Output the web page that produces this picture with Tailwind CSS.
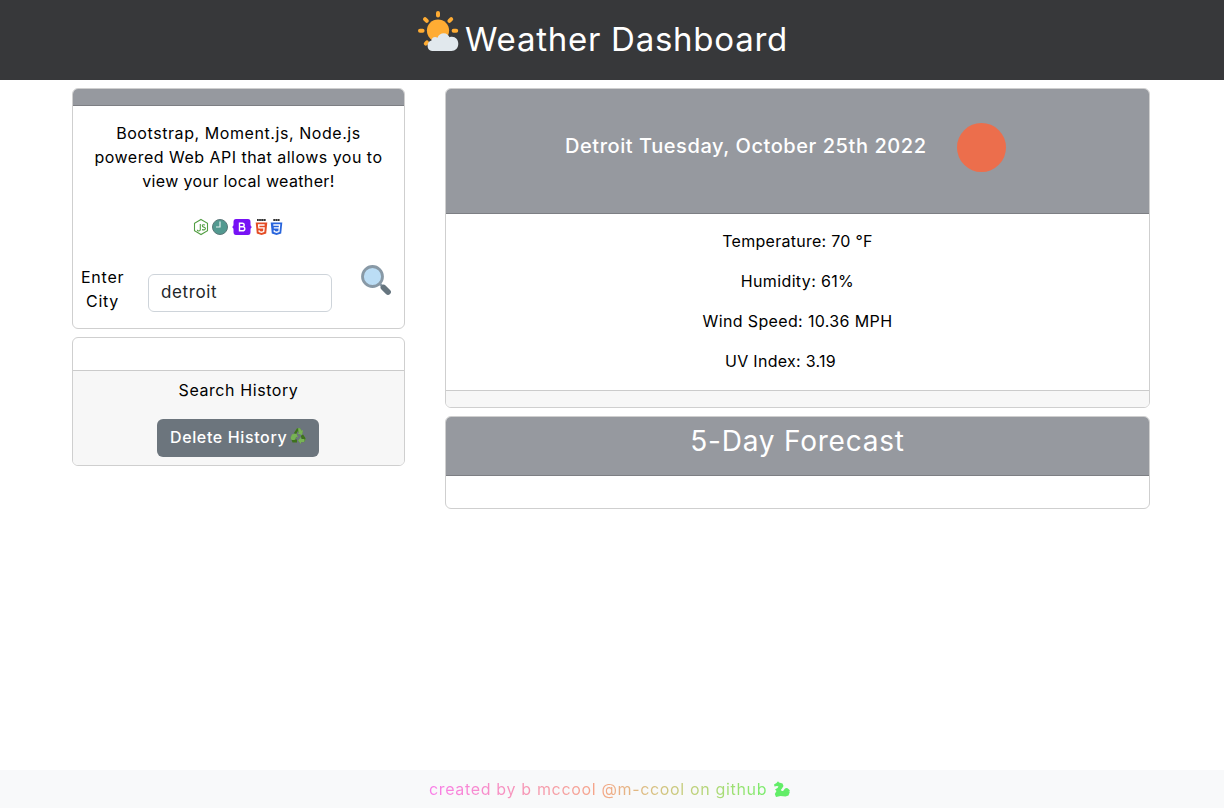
<!DOCTYPE html>
<html lang="en">
<head>
<meta charset="utf-8">
<title>Weather Dashboard</title>
<script src="https://cdn.jsdelivr.net/npm/@tailwindcss/browser@4"></script>
</head>
<body class="min-h-screen flex flex-col bg-white text-black text-base leading-6 font-['Inter',sans-serif] font-normal">
<header class="h-20 bg-[#37383a] flex pl-[416px] pt-[10px] text-white">
  <svg class="w-[44px] h-[44px] shrink-0" viewBox="6 5 44 44">
    <g stroke="#ffac33" stroke-width="4" stroke-linecap="round"><path d="M28 8v2.600M10 25.700h2.600M43.600 25.700h2.600M15 14.100l1.800 1.800M41.200 14.100l-1.800 1.800M15.800 38.600l1.200-1.200"/></g>
    <circle cx="28" cy="25.600" r="11.100" fill="#ffac33"/>
    <path fill="#e1e8ed" d="M22 46a5.400 5.400 0 0 1-.5-10.500c-.2-3 3.500-4.700 6-2.800 1-2.900 3.500-4.500 6.200-4.500 3 0 4.800 1.700 5.800 4.100 5-1.700 8.800 1.800 8.800 6.500 0 4.300-3 7.200-6.800 7.200z"/>
  </svg>
  <h1 class="pl-[5px] pt-[9px] text-[33px] leading-10 font-normal whitespace-nowrap tracking-[0.74px]">Weather Dashboard</h1>
</header>
<main class="grow grid grid-cols-[333px_705px] gap-x-10 pl-[72px] pt-2 items-start text-center whitespace-nowrap">
  <div class="flex flex-col gap-2">
    <section class="h-[241px] border border-[#cfcfcf] rounded-md overflow-hidden flex flex-col">
      <div class="h-[17px] shrink-0 bg-[#96999f] border-b border-[#7d7f84]"></div>
      <p class="pt-[15px]"><span class="tracking-[0.57px]">Bootstrap, Moment.js, Node.js</span><br><span class="tracking-[0.48px]">powered Web API that allows you to</span><br><span class="tracking-[0.36px]">view your local weather!</span></p>
      <div class="flex items-center h-4 mt-[26px] pl-[120px]">
        <svg class="w-[92px] h-[18px]" viewBox="193 218 92 18">
          <g fill="none" stroke="#539e43" stroke-width="1.100"><path d="M201 219.500l6.500 3.700v7.600l-6.500 3.700-6.500-3.700v-7.600z"/><path d="M200.300 224v5.500q0 1.500-1.500 1.500t-1.500-1.300M205 225q-2.700-.9-2.700.7 0 1.200 1.500 1.400 1.600.2 1.600 1.500 0 1.900-3.400 1"/></g>
          <circle cx="220" cy="227" r="7.500" fill="#529990" stroke="#5b7778" stroke-width="1"/><path d="M220 221.500v5.500h-4" stroke="#e3f0ee" stroke-width="1.200" fill="none"/>
          <path fill="#7712f5" d="M236 219h12q2.500 0 2.500 3v2.500q0 2 1.500 2.500-1.500.5-1.500 2.500v2.500q0 3-2.500 3h-12q-2.500 0-2.500-3v-2.500q0-2-1.500-2.500 1.500-.5 1.500-2.500v-2.500q0-3 2.500-3z"/><path d="M239.500 223.200v7.600h3q2.300 0 2.300-2.100t-2.300-1.900h-3 2.700q2 0 2-1.800t-2-1.800z" fill="none" stroke="#fff" stroke-width="1.400"/>
          <path fill="#e44d26" d="M255.700 222.500h11.600l-1.100 11-4.700 1.500-4.700-1.500z"/><path d="M257 220h9" stroke="#333" stroke-width="2" stroke-dasharray="1.800 .3"/><path d="M264.600 225h-6l.3 2.900h5.200l-.4 3.600-2.300.7-2.200-.7-.1-1.200" fill="none" stroke="#fff" stroke-width="1.300"/>
          <path fill="#2965dc" d="M270.700 222.500h11.600l-1.100 11-4.700 1.500-4.700-1.500z"/><path d="M273.300 220h6.500" stroke="#333" stroke-width="2" stroke-dasharray="1.900 .3"/><path d="M273.300 225h6.300l-.7 6.500-2.300.7-2.300-.7-.1-1.200M273.800 227.900h5.400" fill="none" stroke="#fff" stroke-width="1.300"/>
        </svg>
      </div>
      <div class="flex mt-[30px] pl-2 items-start">
        <label class="w-[43px] tracking-[0.75px]">Enter<br>City</label>
        <div class="ml-6 mt-[9px] w-[184px] h-[38px] border border-[#ced4da] rounded-md px-3 pb-0.5 flex items-center text-[#212529] text-[17px] tracking-[0.6px]">detroit</div>
        <svg class="ml-[28px] -mt-px w-8 h-8" viewBox="0 0 32 32"><path d="M19 19l4 4" stroke="#8899a6" stroke-width="2.500"/><path d="M23.500 23.500l4.500 4.500" stroke="#66757f" stroke-width="5.800" stroke-linecap="round"/><circle cx="12.500" cy="12.500" r="10" fill="#bbddf5" stroke="#8899a6" stroke-width="2.800"/></svg>
      </div>
    </section>
    <section class="h-[129px] border border-[#cfcfcf] rounded-md overflow-hidden">
      <div class="h-8"></div>
      <div class="h-[96px] bg-[#f7f7f7] border-t border-[#cbcbcb] pt-[7px]">
        <p class="tracking-[0.58px]">Search History</p>
        <button class="mt-[17px] -ml-px w-[162px] h-[38px] rounded-md bg-[#6c757d] text-white font-medium inline-flex items-center pl-[13px] pb-0.5"><span class="tracking-[0.63px]">Delete History</span>
          <svg class="ml-[3px] -mt-0.5 w-4 h-4" viewBox="0 0 16 16"><g fill="#5c913b"><path d="M4 5.500l2.200-4.300q.5-.9 1.500-.9h2.500l2.600 4.500-3 1.400-1.900-3.400-1.400 3z"/><path d="M3 6l3.500-.2L8 9l-1.200-.6L5 11.500H1.300Q0 10.600.6 9.400L2 7.600z"/><path d="M13 6.500l2.500 3.800q.5 1-.2 1.900l-1.300 2h-3V16l-3-3.500 3-3.500v2h1.500l-1.700-3z"/></g><g fill="#3e721d"><path d="M7 .5h2l-1.500 3L6 6 4 5zM1 10.500l1.500 4H7v-3H2zM13 6.500l2.500 3.800-1 1.700-2.500-.5-1.200-3.500z"/></g><path fill="#77b255" d="M8 .3h2l1.500 2.500L13 2l-1 5-4.500-1.500L9 4.600zM2 6.200l4.500-.4L8 9.500l-1.700-.7L4.500 12H1.500L.6 10zM8 12.500L11 9v2h3.500l-.5 3h-3v2z"/></svg>
        </button>
      </div>
    </section>
  </div>
  <div class="flex flex-col gap-2">
    <section class="h-[320px] border border-[#cfcfcf] rounded-md overflow-hidden flex flex-col">
      <div class="h-[125px] shrink-0 bg-[#96999f] border-b border-[#7d7f84] flex items-start pl-[119px] text-white text-xl font-medium">
        <h2 class="w-[362px] pt-[43px] text-left tracking-[0.56px]">Detroit Tuesday, October 25th 2022</h2>
        <div class="ml-[30px] mt-[34px] size-[49px] rounded-full bg-[#ec6e4c]"></div>
      </div>
      <div class="grow flex flex-col gap-4 pt-[15px]">
        <p class="tracking-[0.28px]">Temperature: 70 °F</p>
        <p class="tracking-[0.36px]">Humidity: 61%</p>
        <p class="tracking-[0.36px]">Wind Speed: 10.36 MPH</p>
        <p class="pr-[34px] tracking-[0.28px]">UV Index: 3.19</p>
      </div>
      <div class="h-[17px] shrink-0 bg-[#f7f7f7] border-t border-[#cbcbcb]"></div>
    </section>
    <section class="h-[93px] border border-[#cfcfcf] rounded-md overflow-hidden">
      <h2 class="h-[59px] bg-[#96999f] border-b border-[#7d7f84] text-white text-[28px] leading-[34px] pt-[7px] font-normal tracking-[0.78px]">5-Day Forecast</h2>
    </section>
  </div>
</main>
<footer class="h-[38px] bg-[#f8f9fa] flex items-center pl-[429px] whitespace-nowrap">
  <span class="bg-linear-to-r from-[#f97be8] via-[#f5a688] to-[#78ec6c] bg-clip-text text-transparent tracking-[0.66px]">created by b mccool @m-ccool on github</span>
  <svg class="ml-[7px] w-4 h-4" viewBox="0 0 16 16"><path fill="#62ed68" d="M0 3.500L2.500 2 4 .2 5 1.500 8.500 2.500 9.500 5 8 7.500 6.800 9q1 1.600 2.500.8L11 7.500q2-1 3.500.5L16 9.500l-1.500 1H16l-1.500 4-3 1-5-.5-4.500 1L.8 13l1.700-3L1 8.500 3.500 7l1-1.500L3 5 .5 5.500z"/></svg>
</footer>
</body>
</html>
